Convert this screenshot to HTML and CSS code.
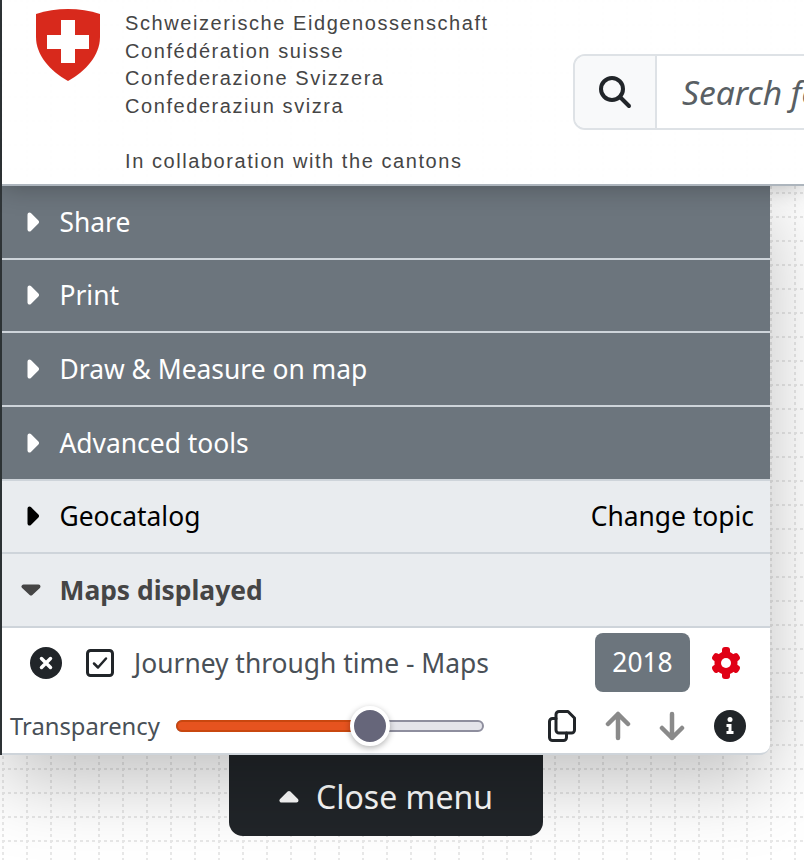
FILE: index.html
```html
<!DOCTYPE html>
<html lang="en">
<head>
    <meta charset="UTF-8">
    <meta name="viewport" content="width=device-width, initial-scale=1.0">
    <title>Map viewer</title>
    <link rel="stylesheet" href="styles.css">
</head>
<body>
    <!-- map canvas behind everything -->
    <svg class="map" width="804" height="860">
        <defs>
            <pattern id="grid" width="24" height="24" patternUnits="userSpaceOnUse" x="2" y="0">
                <path d="M0 1H24M1 0V24" stroke="#e8e8e8" stroke-width="2" stroke-dasharray="3 3" fill="none"/>
            </pattern>
        </defs>
        <rect width="804" height="860" fill="url(#grid)"/>
    </svg>

    <div class="shell">
        <header class="header">
            <div class="logo">
                <svg width="64" height="72" viewBox="0 0 64 72">
                    <path d="M0 5C10 1.500 21 0 32 0S54 1.500 64 5V28C64 46 50 62 32 72C14 62 0 46 0 28Z" fill="#d8291c"/>
                    <path d="M25 11H39V26H53V40H39V54H25V40H11V26H25Z" fill="#fff"/>
                </svg>
            </div>
            <div class="confederation">
                <div>Schweizerische Eidgenossenschaft</div>
                <div>Confédération suisse</div>
                <div>Confederazione Svizzera</div>
                <div>Confederaziun svizra</div>
                <div class="cantons">In collaboration with the cantons</div>
            </div>
            <div class="search">
                <div class="search-icon">
                    <svg width="34" height="34" viewBox="0 0 34 34">
                        <circle cx="14" cy="14" r="11" fill="none" stroke="#212529" stroke-width="4"/>
                        <path d="M22 22L31 31" stroke="#212529" stroke-width="4" stroke-linecap="round"/>
                    </svg>
                </div>
                <div class="search-input">Search for places</div>
            </div>
        </header>

        <div class="panel">
            <div class="row row-dark">
                <svg class="caret" width="12" height="20" viewBox="0 0 12 20"><path d="M2.500 2.500L10 10L2.500 17.500Z" fill="#fff" stroke="#fff" stroke-width="4" stroke-linejoin="round"/></svg>
                <span>Share</span>
            </div>
            <div class="row row-dark">
                <svg class="caret" width="12" height="20" viewBox="0 0 12 20"><path d="M2.500 2.500L10 10L2.500 17.500Z" fill="#fff" stroke="#fff" stroke-width="4" stroke-linejoin="round"/></svg>
                <span>Print</span>
            </div>
            <div class="row row-dark">
                <svg class="caret" width="12" height="20" viewBox="0 0 12 20"><path d="M2.500 2.500L10 10L2.500 17.500Z" fill="#fff" stroke="#fff" stroke-width="4" stroke-linejoin="round"/></svg>
                <span>Draw &amp; Measure on map</span>
            </div>
            <div class="row row-dark">
                <svg class="caret" width="12" height="20" viewBox="0 0 12 20"><path d="M2.500 2.500L10 10L2.500 17.500Z" fill="#fff" stroke="#fff" stroke-width="4" stroke-linejoin="round"/></svg>
                <span>Advanced tools</span>
            </div>
            <div class="row row-light">
                <svg class="caret" width="12" height="20" viewBox="0 0 12 20"><path d="M2.500 2.500L10 10L2.500 17.500Z" fill="#000" stroke="#000" stroke-width="4" stroke-linejoin="round"/></svg>
                <span>Geocatalog</span>
                <span class="topic">Change topic</span>
            </div>
            <div class="row row-light row-open">
                <svg class="caret-down" width="20" height="12" viewBox="0 0 20 12"><path d="M2.500 2.500H17.500L10 9.500Z" fill="#454545" stroke="#454545" stroke-width="4" stroke-linejoin="round"/></svg>
                <span>Maps displayed</span>
            </div>

            <div class="layer">
                <div class="layer-top">
                    <svg class="layer-close" width="32" height="32" viewBox="0 0 32 32">
                        <circle cx="16" cy="16" r="16" fill="#212529"/>
                        <path d="M11.500 11.500L20.500 20.500M20.500 11.500L11.500 20.500" stroke="#fff" stroke-width="3.500" stroke-linecap="round"/>
                    </svg>
                    <svg class="layer-check" width="28" height="28" viewBox="0 0 28 28">
                        <rect x="1.500" y="1.500" width="25" height="25" rx="3" fill="#fff" stroke="#212529" stroke-width="3"/>
                        <path d="M8 14.500L12 18.500L20 9.500" fill="none" stroke="#212529" stroke-width="2.500" stroke-linecap="round" stroke-linejoin="round"/>
                    </svg>
                    <span class="layer-name">Journey through time - Maps</span>
                    <div class="year">2018</div>
                    <svg class="gear" width="32" height="32" viewBox="0 0 32 32">
                        <g fill="#e00015">
                            <circle cx="16" cy="16" r="11.500"/>
                            <rect x="12" y="0" width="8" height="32" rx="3"/>
                            <rect x="12" y="1" width="8" height="30" rx="3" transform="rotate(60 16 16)"/>
                            <rect x="12" y="1" width="8" height="30" rx="3" transform="rotate(120 16 16)"/>
                        </g>
                        <circle cx="16" cy="16" r="5" fill="#fff"/>
                    </svg>
                </div>
                <div class="layer-bottom">
                    <span class="transparency">Transparency</span>
                    <div class="slider">
                        <div class="slider-fill"></div>
                        <div class="slider-thumb"></div>
                    </div>
                    <svg class="copy" width="28" height="32" viewBox="0 0 28 32" fill="none" stroke="#212529" stroke-width="3" stroke-linejoin="round" stroke-linecap="round">
                        <path d="M11 1.500H20L26.500 8V20A3 3 0 0 1 23.500 23H11A3 3 0 0 1 8 20V4.500A3 3 0 0 1 11 1.500Z"/>
                        <path d="M8 8.500H4.500A3 3 0 0 0 1.500 11.500V27.500A3 3 0 0 0 4.500 30.500H15.500A3 3 0 0 0 18.500 27.500V23"/>
                    </svg>
                    <svg class="arrow arrow-up" width="28" height="30" viewBox="0 0 28 30" fill="none" stroke="#8a8a8a" stroke-width="4.500" stroke-linecap="round" stroke-linejoin="round">
                        <path d="M14 27V3M4 13L14 3L24 13"/>
                    </svg>
                    <svg class="arrow arrow-down" width="28" height="30" viewBox="0 0 28 30" fill="none" stroke="#8a8a8a" stroke-width="4.500" stroke-linecap="round" stroke-linejoin="round">
                        <path d="M14 3V27M4 17L14 27L24 17"/>
                    </svg>
                    <svg class="info" width="32" height="32" viewBox="0 0 32 32">
                        <circle cx="16" cy="16" r="16" fill="#212529"/>
                        <circle cx="16" cy="9.500" r="2.500" fill="#fff"/>
                        <path d="M12.500 14H17.500V21H19.500V24H12.500V21H14.500V17H12.500Z" fill="#fff"/>
                    </svg>
                </div>
            </div>
        </div>
    </div>

    <div class="close-menu">
        <svg width="20" height="13" viewBox="0 0 20 13"><path d="M2.500 10.500H17.500L10 3Z" fill="#fff" stroke="#fff" stroke-width="4" stroke-linejoin="round"/></svg>
        <span>Close menu</span>
    </div>
</body>
</html>
```

FILE: styles.css
```css
* {
    box-sizing: border-box;
}
body {
    margin: 0;
    height: 860px;
    overflow: hidden;
    position: relative;
    background-color: #fff;
    font-family: "Noto Sans", sans-serif;
}
.map {
    position: absolute;
    left: 0;
    top: 0;
    z-index: -1;
}
.shell {
    width: 804px;
    height: 755px;
    border-left: 2px solid #33393c;
    display: flex;
    flex-direction: column;
}
.header {
    height: 186px;
    flex: none;
    display: flex;
    overflow: hidden;
    position: relative;
    z-index: 2;
    background: rgba(255, 255, 255, 0.95);
    border-bottom: 2px solid #adb5bd;
    box-shadow: 0 0 26px rgba(0, 0, 0, 0.3);
}
.logo {
    flex: none;
    margin: 9px 25px 0 34px;
}
.confederation {
    flex: none;
    width: 448px;
    padding-top: 10px;
    font-family: "Liberation Sans", Arial, sans-serif;
    font-size: 20px;
    line-height: 27.500px;
    letter-spacing: 1.570px;
    color: #454545;
}
.cantons {
    margin-top: 27.500px;
}
.search {
    flex: none;
    width: 500px;
    height: 76px;
    margin-top: 54px;
    display: flex;
    background: #fff;
    border: 2px solid #dee2e6;
    border-radius: 12px;
}
.search-icon {
    width: 82px;
    flex: none;
    display: flex;
    justify-content: center;
    align-items: center;
    padding-bottom: 1px;
    background: #f8f9fa;
    border-right: 2px solid #dee2e6;
    border-radius: 10px 0 0 10px;
}
.search-input {
    padding-left: 25px;
    font-size: 33.600px;
    line-height: 72px;
    font-style: italic;
    color: #595f64;
    white-space: nowrap;
}
.panel {
    width: 768px;
    flex: 1;
    background: #fff;
    border-bottom: 2px solid #ced4da;
    border-radius: 0 0 10px 0;
    box-shadow: 0 26px 77px rgba(0, 0, 0, 0.25);
    position: relative;
    z-index: 1;
}
.row {
    height: 73.670px;
    display: flex;
    align-items: center;
    padding: 0 16px 0 25px;
    font-size: 26.400px;
    border-bottom: 2px solid #ced4da;
}
.row-dark {
    background: #6c757d;
    color: #fff;
}
.row-light {
    background: #e9ecef;
    color: #000;
}
.row-open {
    font-weight: bold;
    color: #454545;
    padding-left: 19px;
}
.caret {
    flex: none;
    margin-right: 20.500px;
}
.caret-down {
    flex: none;
    margin-right: 18.500px;
}
.topic {
    margin-left: auto;
}
.layer {
    color: #495057;
}
.layer-top {
    height: 70px;
    display: flex;
    align-items: center;
    padding-left: 28px;
}
.layer-close {
    flex: none;
    margin-right: 24px;
}
.layer-check {
    flex: none;
    margin-right: 20px;
}
.layer-name {
    flex: 1;
    font-size: 26.400px;
    white-space: nowrap;
}
.year {
    flex: none;
    width: 95px;
    height: 59px;
    display: flex;
    justify-content: center;
    align-items: center;
    background: #6c757d;
    color: #fff;
    font-size: 26.400px;
    border-radius: 8px;
    margin-right: 20px;
    margin-bottom: 1px;
}
.gear {
    flex: none;
    margin-right: 28px;
}
.layer-bottom {
    display: flex;
    align-items: center;
    height: 55px;
    padding-left: 8px;
    padding-top: 2px;
}
.transparency {
    width: 166px;
    flex: none;
    font-size: 23.800px;
}
.slider {
    flex: none;
    width: 308px;
    height: 12px;
    position: relative;
    background: #e4e4ea;
    border: 2px solid #8e8e9e;
    border-radius: 6px;
    margin-right: 64px;
}
.slider-fill {
    position: absolute;
    left: -2px;
    top: -2px;
    height: 12px;
    width: 194px;
    background: #e6531f;
    border: 2px solid #c9470f;
    border-radius: 6px 0 0 6px;
}
.slider-thumb {
    position: absolute;
    left: 172px;
    top: -16px;
    width: 40px;
    height: 40px;
    background: #66667a;
    border: 4px solid #fff;
    border-radius: 50%;
    box-shadow: 0 2px 6px rgba(0, 0, 0, 0.3);
}
.copy {
    flex: none;
    margin-right: 28px;
}
.arrow {
    flex: none;
}
.arrow-up {
    margin-right: 26px;
}
.arrow-down {
    margin-right: 28px;
}
.info {
    flex: none;
}
.close-menu {
    width: 314px;
    height: 81px;
    margin-left: 229px;
    display: flex;
    align-items: center;
    justify-content: center;
    gap: 17px;
    padding-top: 2px;
    background: #212529;
    color: #fff;
    font-size: 32px;
    border-radius: 0 0 14px 14px;
    position: relative;
}
```
